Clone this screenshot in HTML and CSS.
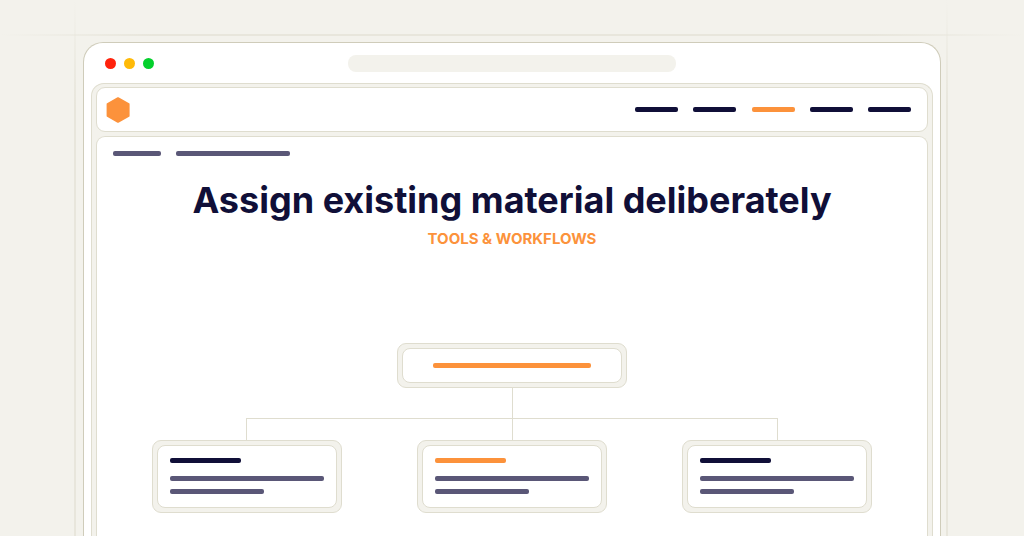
FILE: index.html
```html
<!DOCTYPE html>
<html lang="en">
  <head>
    <meta charset="UTF-8" />
    <meta name="viewport" content="width=device-width, initial-scale=1.0" />
    <title>Assign existing material deliberately</title>
    <link rel="stylesheet" href="styles.css">
  </head>

  <body>
    <div class="guide guide-top"></div>
    <div class="guide guide-left"></div>
    <div class="guide guide-right"></div>

    <div class="browser">
      <div class="titlebar">
        <div class="dots">
          <span class="dot red"></span>
          <span class="dot yellow"></span>
          <span class="dot green"></span>
        </div>
        <div class="address"></div>
      </div>

      <div class="viewport">
        <header class="panel topbar">
          <svg class="logo" viewBox="0 0 24 26" aria-hidden="true">
            <path d="M12 1.2 L22.6 7.1 V18.9 L12 24.8 L1.6 18.9 V7.1 Z" />
          </svg>
          <div class="menu">
            <span class="bar dark"></span>
            <span class="bar dark"></span>
            <span class="bar orange"></span>
            <span class="bar dark"></span>
            <span class="bar dark"></span>
          </div>
        </header>

        <main class="panel content">
          <div class="breadcrumbs">
            <span class="bar muted crumb"></span>
            <span class="bar muted crumb-long"></span>
          </div>

          <h1>Assign existing material deliberately</h1>
          <p class="category">TOOLS &amp; WORKFLOWS</p>

          <div class="tree">
            <div class="node root">
              <div class="node-inner">
                <span class="bar orange"></span>
              </div>
            </div>

            <div class="stem"></div>
            <div class="branches">
              <div class="branch"></div>
              <div class="branch last"></div>
            </div>

            <div class="children">
              <div class="node child">
                <div class="node-inner">
                  <span class="bar dark heading"></span>
                  <span class="bar muted line"></span>
                  <span class="bar muted line-short"></span>
                </div>
              </div>
              <div class="node child">
                <div class="node-inner">
                  <span class="bar orange heading"></span>
                  <span class="bar muted line"></span>
                  <span class="bar muted line-short"></span>
                </div>
              </div>
              <div class="node child">
                <div class="node-inner">
                  <span class="bar dark heading"></span>
                  <span class="bar muted line"></span>
                  <span class="bar muted line-short"></span>
                </div>
              </div>
            </div>
          </div>
        </main>
      </div>
    </div>
  </body>
</html>
```
FILE: styles.css
```css
* {
  margin: 0;
  padding: 0;
  box-sizing: border-box;
}

body {
  position: relative;
  display: flex;
  flex-direction: column;
  min-height: 100vh;
  padding: 42px 83px 0;
  background-color: #f3f2ec;
  font-family: Inter, "Open Sans", sans-serif;
}

/* faded guide lines behind the window */
.guide {
  position: absolute;
}

.guide-top {
  top: 34px;
  left: 0;
  right: 0;
  height: 2px;
  background: linear-gradient(to right, transparent, #e8e6dc 15%, #e8e6dc 85%, transparent);
}

.guide-left,
.guide-right {
  top: 0;
  bottom: 0;
  width: 2px;
  background: linear-gradient(to bottom, transparent, #e8e6dc 20%);
}

.guide-left {
  left: 74px;
}

.guide-right {
  right: 76px;
}

.browser {
  flex: 1;
  display: flex;
  flex-direction: column;
  padding: 0 7px;
  background-color: #fff;
  border: 1px solid #cfccba;
  border-bottom: none;
  border-radius: 20px 20px 0 0;
}

.titlebar {
  display: grid;
  grid-template-columns: 1fr 39% 1fr;
  align-items: center;
  height: 40px;
}

.dots {
  display: flex;
  gap: 8px;
  padding-left: 14px;
}

.dot {
  width: 11px;
  height: 11px;
  border-radius: 50%;
}

.red {
  background-color: #ff220c;
}

.yellow {
  background-color: #ffba08;
}

.green {
  background-color: #04d02c;
}

.address {
  height: 17px;
  border-radius: 8px;
  background-color: #f3f2ec;
}

.viewport {
  flex: 1;
  display: flex;
  flex-direction: column;
  gap: 4px;
  padding: 3px 4px 0;
  background-color: #f3f2ec;
  border: 1px solid #dfddcf;
  border-bottom: none;
  border-radius: 13px 13px 0 0;
}

.panel {
  background-color: #fff;
  border: 1px solid #dfddcf;
  border-radius: 9px;
}

.topbar {
  display: flex;
  justify-content: space-between;
  align-items: center;
  height: 45px;
  padding: 0 16px 0 9px;
}

.logo {
  width: 24px;
  height: 26px;
  fill: #fc923b;
  stroke: #fc923b;
  stroke-width: 2;
  stroke-linejoin: round;
}

.bar {
  display: block;
  height: 5px;
  border-radius: 2px;
}

.dark {
  background-color: #100f38;
}

.orange {
  background-color: #fc923b;
}

.muted {
  background-color: #5a5777;
}

.menu {
  display: flex;
  justify-content: space-between;
  width: 276px;
}

.menu .bar {
  width: 43px;
}

.content {
  flex: 1;
  border-bottom: none;
  border-radius: 9px 9px 0 0;
}

.breadcrumbs {
  display: flex;
  gap: 15px;
  padding: 14px 16px 0;
}

.crumb {
  width: 48px;
}

.crumb-long {
  width: 114px;
}

h1 {
  margin-top: 22px;
  color: #100f38;
  font-size: 36px;
  font-weight: 700;
  line-height: 44px;
  text-align: center;
}

.category {
  margin-top: 7px;
  color: #fc923b;
  font-size: 15px;
  font-weight: 700;
  line-height: 20px;
  text-align: center;
}

.tree {
  margin-top: 94px;
  padding: 0 55px 23px;
}

.node {
  padding: 4px;
  background-color: #f3f2ec;
  border: 1px solid #dfddcf;
  border-radius: 9px;
}

.node-inner {
  background-color: #fff;
  border: 1px solid #dfddcf;
  border-radius: 8px;
}

.root {
  width: 230px;
  margin: 0 auto;
}

.root .node-inner {
  padding: 14px 30px;
}

.stem {
  width: 1px;
  height: 30px;
  margin: 0 auto;
  background-color: #dfddcf;
}

.branches {
  display: flex;
  padding: 0 94px;
}

.branch {
  flex: 1;
  height: 22px;
  border-top: 1px solid #dfddcf;
  border-left: 1px solid #dfddcf;
}

.last {
  border-right: 1px solid #dfddcf;
}

.children {
  display: flex;
  justify-content: space-between;
}

.child {
  width: 190px;
}

.child .node-inner {
  padding: 12px 12px 13px;
}

.heading {
  width: 46%;
}

.line {
  width: 100%;
  margin-top: 13px;
}

.line-short {
  width: 61%;
  margin-top: 8px;
}
```
